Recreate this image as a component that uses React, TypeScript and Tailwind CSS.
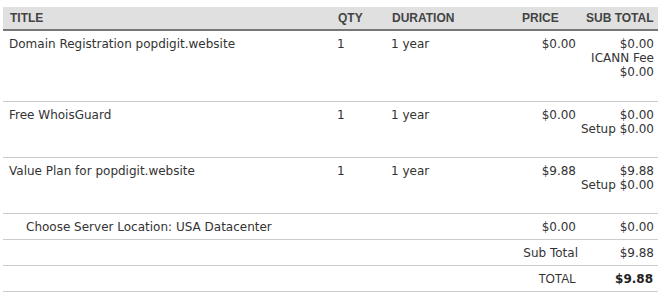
const items = [
  {
    title: 'Domain Registration popdigit.website',
    qty: '1',
    duration: '1 year',
    price: '$0.00',
    sub: ['$0.00', 'ICANN Fee', '$0.00'],
    pad: 'pb-[22px]',
  },
  {
    title: 'Free WhoisGuard',
    qty: '1',
    duration: '1 year',
    price: '$0.00',
    sub: ['$0.00', 'Setup $0.00'],
    pad: 'pb-[21px]',
  },
  {
    title: 'Value Plan for popdigit.website',
    qty: '1',
    duration: '1 year',
    price: '$9.88',
    sub: ['$9.88', 'Setup $0.00'],
    pad: 'pb-[21px]',
  },
]

const body = "font-['DejaVu_Sans',Verdana,sans-serif]"
const arial = "font-['Liberation_Sans',Arial,sans-serif]"

export default function App() {
  return (
    <div className="w-[666px] h-[296px] bg-white pt-[7px] pl-[3px]">
      <table
        className={`w-[655px] table-fixed border-collapse text-[12px] leading-[14px] text-[#333] ${body}`}
      >
        <colgroup>
          <col className="w-[328px]" />
          <col className="w-[53px]" />
          <col className="w-[129px]" />
          <col className="w-[67px]" />
          <col className="w-[78px]" />
        </colgroup>
        <thead>
          <tr
            className={`h-[23px] bg-[#e0e0e0] border-b-2 border-[#777] text-left text-[12px] font-bold text-[#444] ${arial}`}
          >
            <th className="pl-[7px] font-bold">TITLE</th>
            <th className="pl-[7px] font-bold">QTY</th>
            <th className="pl-[8px] font-bold">DURATION</th>
            <th className="pl-[9px] font-bold">PRICE</th>
            <th className="pl-[6px] font-bold">SUB TOTAL</th>
          </tr>
        </thead>
        <tbody>
          {items.map((item) => (
            <tr key={item.title} className="border-b border-[#ccc] align-top">
              <td className={`pl-[6px] pt-[6px] ${item.pad}`}>{item.title}</td>
              <td className={`pl-[6px] pt-[6px] ${item.pad}`}>{item.qty}</td>
              <td className={`pl-[7px] pt-[6px] ${item.pad}`}>{item.duration}</td>
              <td className={`pr-[4px] pt-[6px] text-right ${item.pad}`}>{item.price}</td>
              <td className={`pr-[4px] pt-[6px] text-right ${item.pad}`}>
                {item.sub.map((line, i) => (
                  <div key={i}>{line}</div>
                ))}
              </td>
            </tr>
          ))}
          <tr className="border-b border-[#ccc]">
            <td className="pl-[23px] pt-[6px] pb-[5px]">
              Choose Server Location: USA Datacenter
            </td>
            <td />
            <td />
            <td className="pr-[4px] pt-[6px] pb-[5px] text-right">$0.00</td>
            <td className="pr-[4px] pt-[6px] pb-[5px] text-right">$0.00</td>
          </tr>
          <tr className="border-b border-[#ccc]">
            <td />
            <td />
            <td />
            <td className="pr-[2px] pt-[6px] pb-[5px] text-right whitespace-nowrap">
              Sub Total
            </td>
            <td className="pr-[4px] pt-[6px] pb-[5px] text-right">$9.88</td>
          </tr>
          <tr className="border-b border-[#ccc]">
            <td />
            <td />
            <td />
            <td className={`pr-[4px] pt-[6px] pb-[5px] text-right text-[12px] ${arial}`}>
              TOTAL
            </td>
            <td className="pr-[5px] pt-[6px] pb-[5px] text-right font-bold text-[#222]">
              $9.88
            </td>
          </tr>
        </tbody>
      </table>
    </div>
  )
}
